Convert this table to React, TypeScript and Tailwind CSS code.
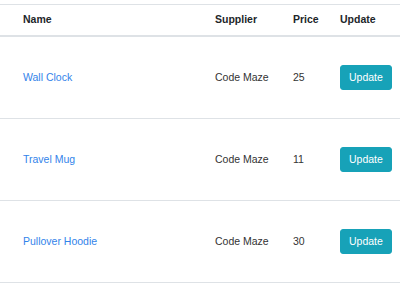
const products = [
  { name: "Wall Clock", supplier: "Code Maze", price: 25 },
  { name: "Travel Mug", supplier: "Code Maze", price: 11 },
  { name: "Pullover Hoodie", supplier: "Code Maze", price: 30 },
];

export default function App() {
  return (
    <div className="bg-white pt-[4px] text-[10.5px] text-[#333]" style={{ fontFamily: '"Liberation Sans", Arial, sans-serif' }}>
      <div className="border-t border-[#dee2e6]">
        <div className="grid h-[32px] grid-cols-[215px_78px_47px_1fr] items-center border-b-2 border-[#dee2e6] font-bold text-[#212529]">
          <div className="pl-[23px]">Name</div>
          <div>Supplier</div>
          <div>Price</div>
          <div>Update</div>
        </div>
        {products.map((p) => (
          <div key={p.name} className="grid h-[82px] grid-cols-[215px_78px_47px_1fr] items-center border-b border-[#dee2e6]">
            <div className="pl-[23px]">
              <a href="#" className="text-[#3283ea]">{p.name}</a>
            </div>
            <div>{p.supplier}</div>
            <div>{p.price}</div>
            <div>
              <button className="h-[25px] rounded-[3px] border border-[#17a2b8] bg-[#17a2b8] px-[8px] leading-[15px] text-white">Update</button>
            </div>
          </div>
        ))}
      </div>
    </div>
  );
}
